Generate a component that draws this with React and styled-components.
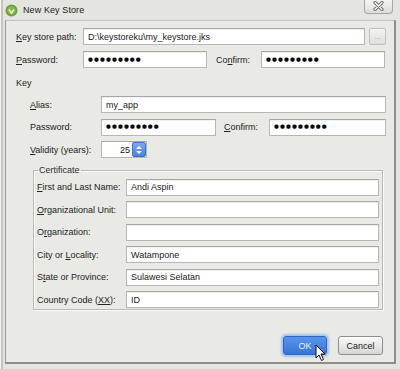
import React from 'react'
import styled, { createGlobalStyle } from 'styled-components'

const GlobalStyle = createGlobalStyle`
  html, body {
    margin: 0;
    padding: 0;
    background: #e6e6e2;
  }
  body {
    font-family: "Liberation Sans", Arial, sans-serif;
    font-size: 9px;
    color: #1e1e1e;
  }
`

const Window = styled.div`
  position: relative;
  width: 400px;
  height: 369px;
  box-sizing: border-box;
  display: flex;
  flex-direction: column;
  background: #e4e4e0;
  padding: 0 4px 5px 5px;
  box-shadow: inset 1px 0 0 #f4f4f2, inset 3px 0 0 #c4c4c0;
`

const TitleBar = styled.div`
  height: 20px;
  display: flex;
  align-items: center;
  gap: 5px;
  position: relative;
`

const Title = styled.span`
  font-size: 9px;
  color: #1a1a1a;
  letter-spacing: 0.1px;
`

const CloseButton = styled.div`
  position: absolute;
  right: 3px;
  top: -1px;
  width: 29px;
  height: 15px;
  box-sizing: border-box;
  border: 1px solid #a6a6a4;
  border-top: none;
  border-radius: 0 0 4px 4px;
  background: linear-gradient(#f6f6f4, #dcdcd8);
  display: flex;
  align-items: center;
  justify-content: center;
`

const Content = styled.div`
  flex: 1;
  display: flex;
  flex-direction: column;
  background: #e9e9e5;
  border: 1px solid #9a9a97;
  border-top-color: #c2c2be;
  border-right-width: 2px;
  border-right-color: #8d8d8b;
  border-bottom-width: 2px;
  border-bottom-color: #8d8d8b;
  padding: 7px 8px 0 10px;
`

const Rows = styled.div`
  display: flex;
  flex-direction: column;
  gap: ${p => p.$gap || 6}px;
  padding-left: ${p => p.$indent || 0}px;
`

const Row = styled.div`
  display: flex;
  align-items: center;
  height: 17px;
`

const Label = styled.div`
  width: ${p => p.$w}px;
  margin-left: ${p => p.$ml || 0}px;
  flex-shrink: 0;
  white-space: nowrap;
  color: #222;
`

const U = styled.span`
  text-decoration: underline;
  text-underline-offset: 1px;
`

const Field = styled.div`
  box-sizing: border-box;
  height: ${p => p.$h || 17}px;
  width: ${p => (p.$w ? `${p.$w}px` : 'auto')};
  flex: ${p => (p.$w ? '0 0 auto' : '1')};
  background: #fff;
  border: 1px solid #b6b6b2;
  border-top-color: #a6a6a2;
  box-shadow: inset 0 1px 0 #f2f2f0;
  padding-left: 4px;
  display: flex;
  align-items: center;
  white-space: nowrap;
  overflow: hidden;
  color: #1a1a1a;
`

const Dots = styled.span`
  font-family: "DejaVu Sans", sans-serif;
  font-size: 5.6px;
  letter-spacing: 1.1px;
  line-height: 1;
  color: #000;
`

const BrowseButton = styled.div`
  width: 17px;
  height: 17px;
  box-sizing: border-box;
  margin-left: 4px;
  border: 1px solid #c0c0bc;
  border-radius: 2px;
  background: linear-gradient(#f4f4f2, #dededa);
  color: #a0a09c;
  font-size: 7px;
  display: flex;
  align-items: center;
  justify-content: center;
`

const SectionTitle = styled.div`
  margin-top: 10px;
  margin-bottom: 7px;
  height: 11px;
  line-height: 11px;
`

const Spinner = styled.div`
  width: 46px;
  height: 17px;
  box-sizing: border-box;
  display: flex;
  background: #fff;
  border: 1px solid #b6b6b2;
  border-top-color: #a6a6a2;
`

const SpinValue = styled.div`
  flex: 1;
  display: flex;
  align-items: center;
  justify-content: flex-end;
  padding-right: 2px;
  color: #111;
`

const SpinButtons = styled.div`
  width: 14px;
  border-radius: 2px;
  background: linear-gradient(#7ea8ec, #4b82dc);
  border: 1px solid #3f73c9;
  box-sizing: border-box;
  display: flex;
  flex-direction: column;
  align-items: center;
  justify-content: center;
  gap: 2px;
`

const Group = styled.fieldset`
  margin: 1px 3px 0 3px;
  padding: 0 3px 1px 3px;
  border: 1px solid #b8b8b4;
  box-shadow: inset 1px 1px 0 #fafaf8, 1px 1px 0 #fafaf8;
  min-width: 0;
`

const Legend = styled.legend`
  padding: 0 1px;
  margin-left: 1px;
  line-height: 11px;
  color: #2a2a2a;
`

const GroupRows = styled.div`
  margin-top: 3px;
  display: flex;
  flex-direction: column;
  gap: 5.6px;
`

const ButtonBar = styled.div`
  margin-top: auto;
  display: flex;
  justify-content: flex-end;
  gap: 11px;
  padding: 0 3px 7px 0;
`

const Button = styled.div`
  width: ${p => p.$w}px;
  height: 19px;
  box-sizing: border-box;
  border-radius: 3px;
  display: flex;
  align-items: center;
  justify-content: center;
  font-size: 9px;
  border: 1px solid ${p => (p.$primary ? '#2f66c2' : '#8e8e8c')};
  background: ${p =>
    p.$primary
      ? 'linear-gradient(#5a95ea, #3673d6)'
      : 'linear-gradient(#fbfbfa, #d6d6d3)'};
  color: ${p => (p.$primary ? '#eaf2ff' : '#1e1e1e')};
  box-shadow: ${p =>
    p.$primary ? '0 0 2px 2px rgba(110, 165, 240, 0.55)' : 'inset 0 1px 0 #fff'};
`

const Cursor = styled.svg`
  position: absolute;
  left: 315px;
  top: 344px;
`

const AppIcon = () => (
  <svg width="13" height="13" viewBox="0 0 13 13">
    <circle cx="6.5" cy="6.5" r="6" fill="#6f9f3c" />
    <circle cx="6.5" cy="6.5" r="4.2" fill="#88b855" />
    <path d="M4 5.5 L6.5 9 L9 5.5" stroke="#e8f2d8" strokeWidth="1.4" fill="none" />
  </svg>
)

const CloseGlyph = () => (
  <svg width="11" height="10" viewBox="0 0 11 10">
    <path d="M2 1.5 L9 8.5 M9 1.5 L2 8.5" stroke="#6c6c6a" strokeWidth="3.2" strokeLinecap="round" />
    <path d="M2 1.5 L9 8.5 M9 1.5 L2 8.5" stroke="#fafafa" strokeWidth="1.3" strokeLinecap="round" />
  </svg>
)

const SpinArrows = () => (
  <>
    <svg width="6" height="3" viewBox="0 0 6 3">
      <path d="M0 3 L3 0 L6 3 Z" fill="#fff" />
    </svg>
    <svg width="6" height="3" viewBox="0 0 6 3">
      <path d="M0 0 L3 3 L6 0 Z" fill="#fff" />
    </svg>
  </>
)

const dots = '●●●●●●●●●'

const certificate = [
  [<><U>F</U>irst and Last Name:</>, 'Andi Aspin'],
  [<><U>O</U>rganizational Unit:</>, ''],
  [<>O<U>r</U>ganization:</>, ''],
  [<>City or <U>L</U>ocality:</>, 'Watampone'],
  [<>S<U>t</U>ate or Province:</>, 'Sulawesi Selatan'],
  [<>Country Code (<U>XX</U>):</>, 'ID'],
]

export default function App() {
  return (
    <>
      <GlobalStyle />
      <Window>
        <TitleBar>
          <AppIcon />
          <Title>New Key Store</Title>
          <CloseButton>
            <CloseGlyph />
          </CloseButton>
        </TitleBar>

        <Content>
          <Rows>
            <Row>
              <Label $w={67}><U>K</U>ey store path:</Label>
              <Field>D:\keystoreku\my_keystore.jks</Field>
              <BrowseButton>...</BrowseButton>
            </Row>
            <Row>
              <Label $w={67}><U>P</U>assword:</Label>
              <Field $w={124}><Dots>{dots}</Dots></Field>
              <Label $w={45} $ml={9}>Co<U>n</U>firm:</Label>
              <Field $w={124}><Dots>{dots}</Dots></Field>
            </Row>
          </Rows>

          <SectionTitle>Key</SectionTitle>

          <Rows $indent={14} $gap={5.5}>
            <Row>
              <Label $w={71}><U>A</U>lias:</Label>
              <Field>my_app</Field>
            </Row>
            <Row>
              <Label $w={71}>Password:</Label>
              <Field $w={115}><Dots>{dots}</Dots></Field>
              <Label $w={45} $ml={8}><U>C</U>onfirm:</Label>
              <Field><Dots>{dots}</Dots></Field>
            </Row>
            <Row>
              <Label $w={71}><U>V</U>alidity (years):</Label>
              <Spinner>
                <SpinValue>25</SpinValue>
                <SpinButtons>
                  <SpinArrows />
                </SpinButtons>
              </Spinner>
            </Row>

            <Group>
              <Legend>Certificate</Legend>
              <GroupRows>
                {certificate.map(([label, value], i) => (
                  <Row key={i}>
                    <Label $w={89}>{label}</Label>
                    <Field>{value}</Field>
                  </Row>
                ))}
              </GroupRows>
            </Group>
          </Rows>

          <ButtonBar>
            <Button $w={44} $primary>OK</Button>
            <Button $w={45}>Cancel</Button>
          </ButtonBar>
        </Content>

        <Cursor width="12" height="18" viewBox="0 0 12 18">
          <path d="M1 1 L1 14 L4 11 L6.5 16.5 L8.5 15.5 L6 10 L10 10 Z" fill="#fff" stroke="#111" strokeWidth="1" strokeLinejoin="round" />
        </Cursor>
      </Window>
    </>
  )
}
